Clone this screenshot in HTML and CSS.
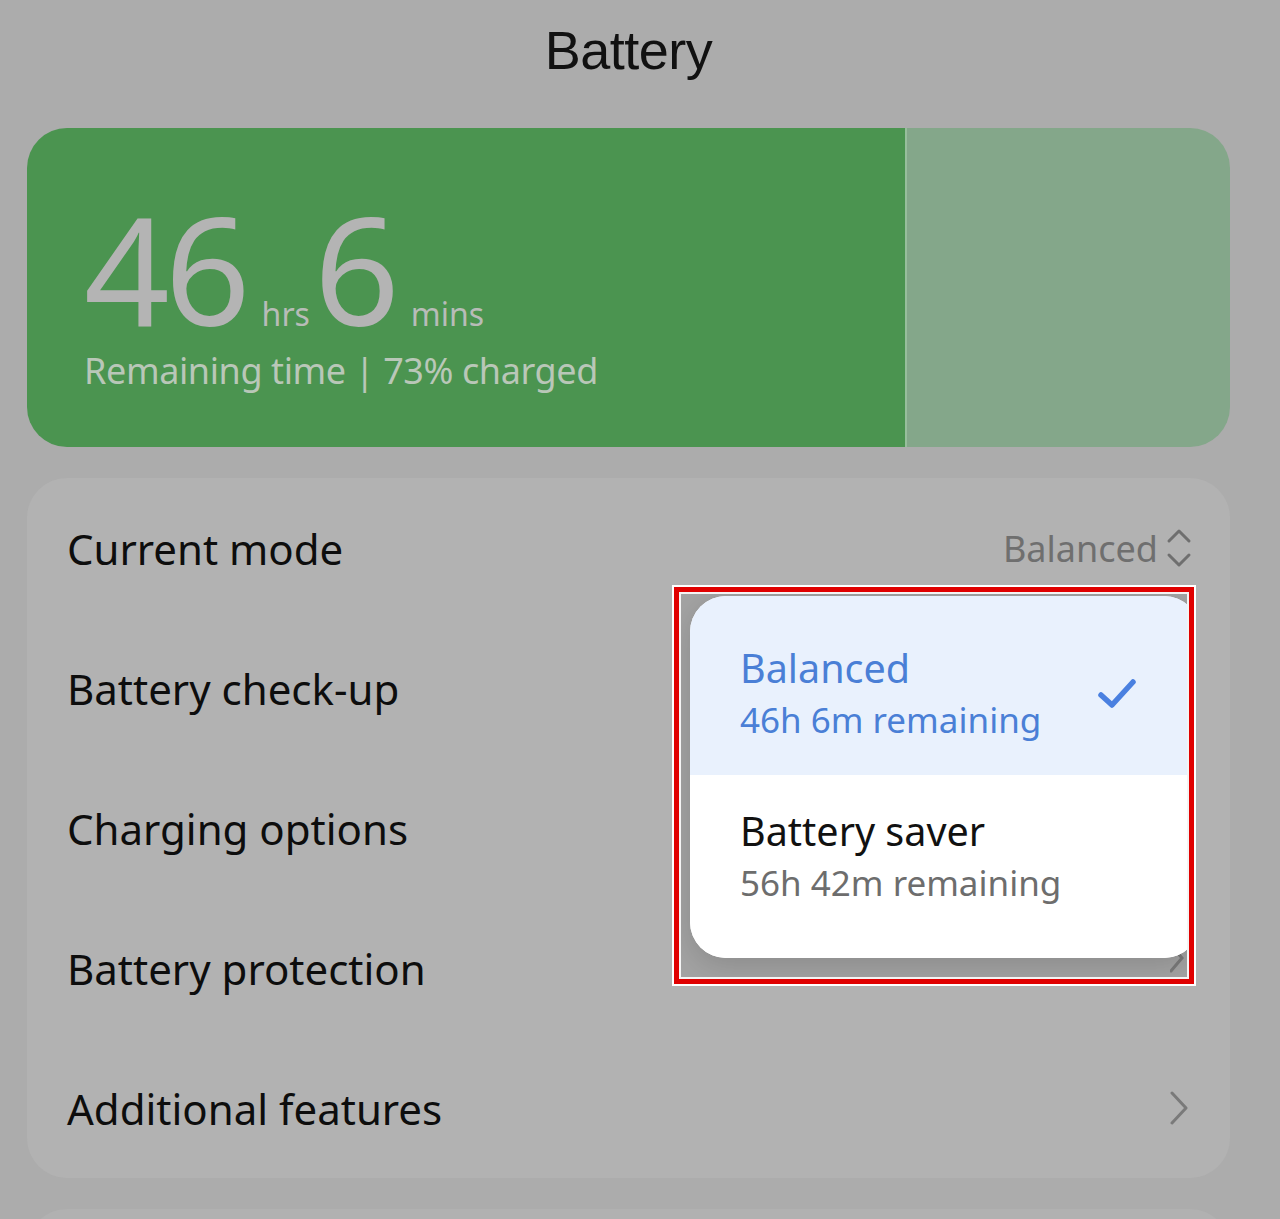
FILE: index.html
```html
<!DOCTYPE html>
<html lang="en">
<head>
<meta charset="utf-8">
<title>Battery</title>
<link rel="stylesheet" href="styles.css">
</head>
<body>
<div class="page">
  <header class="topbar"><h1 class="title">Battery</h1></header>

  <section class="battery-card">
    <div class="charge">
      <div class="time">
        <span class="big">46</span><span class="unit">hrs</span><span class="big">6</span><span class="unit">mins</span>
      </div>
      <div class="status">Remaining time | 73% charged</div>
    </div>
    <div class="rest"></div>
  </section>

  <section class="list-card">
    <div class="row">
      <span class="label">Current mode</span>
      <span class="value">Balanced
        <svg class="updown" width="26" height="40" viewBox="0 0 26 40"><path d="M3 13 L13 3 L23 13 M3 27 L13 37 L23 27" fill="none" stroke="#6f6f6f" stroke-width="3" stroke-linecap="round" stroke-linejoin="round"/></svg>
      </span>
    </div>
    <div class="row"><span class="label">Battery check-up</span></div>
    <div class="row"><span class="label">Charging options</span></div>
    <div class="row"><span class="label">Battery protection</span></div>
    <div class="row">
      <span class="label">Additional features</span>
      <svg class="chev" width="18" height="34" viewBox="0 0 18 34"><path d="M2 2 L16 17 L2 32" fill="none" stroke="#7a7a7a" stroke-width="3" stroke-linecap="round" stroke-linejoin="round"/></svg>
    </div>

    <div class="highlight">
      <div class="popup">
        <div class="option selected">
          <div class="opt-text">
            <div class="opt-title">Balanced</div>
            <div class="opt-sub">46h 6m remaining</div>
          </div>
          <svg class="check" width="40" height="32" viewBox="0 0 40 32"><path d="M4 17 L15 27 L36 4" fill="none" stroke="#4a80e0" stroke-width="5.5" stroke-linecap="round" stroke-linejoin="round"/></svg>
        </div>
        <div class="option saver">
          <div class="opt-text">
            <div class="opt-title dark">Battery saver</div>
            <div class="opt-sub grey">56h 42m remaining</div>
          </div>
        </div>
      </div>
      <svg class="hidden-chev" width="14" height="30" viewBox="0 0 14 30"><path d="M1 2 L12 15 L1 28" fill="none" stroke="#7a7a7a" stroke-width="3" stroke-linecap="round"/></svg>
    </div>
  </section>

  <section class="next-card"></section>
</div>
</body>
</html>
```
FILE: styles.css
```css
* { box-sizing: border-box; margin: 0; padding: 0; }
html, body { background: #acacac; }
body { width: 1280px; height: 1219px; overflow: hidden; font-family: "Noto Sans", "Open Sans", sans-serif; }
.page { display: flex; flex-direction: column; padding: 0 50px 0 27px; }
.topbar { height: 128px; display: flex; justify-content: center; padding-top: 18px; }
.title { font-family: "Liberation Sans", Arial, sans-serif; font-weight: 400; font-size: 54px; line-height: 64px; color: #111; letter-spacing: -0.5px; }

.battery-card { height: 319px; width: 1203px; border-radius: 40px; overflow: hidden; display: flex; }
.charge { flex: 0 0 880px; background: #4b9450; padding: 75px 0 0 57px; border-right: 2px solid #97be9c; }
.rest { flex: 1; background: #84a78a; }
.time { display: flex; align-items: baseline; color: #b4b4b4; height: 130px; }
.big { font-size: 150px; line-height: 130px; font-weight: 400; letter-spacing: -5px; }
.unit { font-size: 32px; margin: 0 4px 0 16px; color: #b8bcb8; }
.status { font-size: 36px; letter-spacing: -0.4px; color: #b9c7b8; margin-top: 13px; }

.list-card { position: relative; margin-top: 31px; width: 1203px; height: 700px; background: #b2b2b2; border-radius: 40px; padding: 0 40px; display: flex; flex-direction: column; }
.row { height: 140px; display: flex; align-items: center; justify-content: space-between; }
.label { font-size: 42px; color: #0d0d0d; }
.value { display: flex; align-items: center; gap: 8px; font-size: 36px; color: #6f6f6f; margin-right: -2px; }
.chev { margin-right: 2px; }

.highlight { position: absolute; left: 645px; top: 107px; width: 524px; height: 401px; border: 2px solid #fff; background: #a3a3a3; overflow: hidden; }
.highlight::before { content: ""; position: absolute; inset: 0; border: 5px solid #e00000; z-index: 3; pointer-events: none; }
.highlight::after { content: ""; position: absolute; inset: 5px; border: 2px solid #f4f4f4; z-index: 3; pointer-events: none; }
.popup { position: absolute; left: 16px; top: 9px; width: 510px; height: 362px; border-radius: 36px; overflow: hidden; background: #fff; box-shadow: 0 8px 30px rgba(0,0,0,0.15); z-index: 2; }
.option { display: flex; align-items: flex-start; justify-content: space-between; padding: 0 63px 0 50px; background: #fff; }
.option.selected { background: #e9f1fd; height: 179px; padding-top: 46px; }
.option.saver { height: 183px; padding-top: 30px; }
.check { margin-top: 36px; }
.opt-title { font-size: 39.5px; color: #4a7fd6; line-height: 52px; }
.opt-sub { font-size: 35px; color: #4a7fd6; line-height: 52px; }
.opt-title.dark { color: #111; }
.opt-sub.grey { color: #6d6d6d; }
.hidden-chev { position: absolute; left: 496px; top: 356px; z-index: 1; }

.next-card { margin-top: 31px; width: 1203px; height: 80px; background: #b1b1b1; border-radius: 40px; }
```
